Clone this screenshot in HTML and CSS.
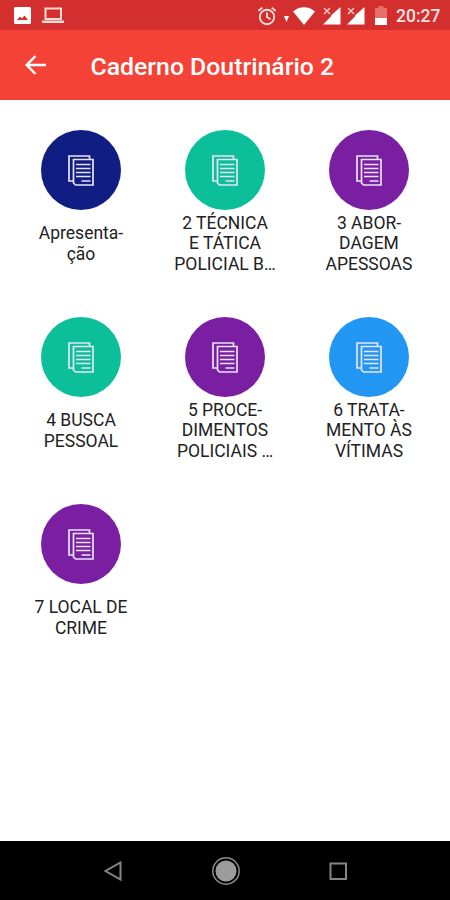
FILE: index.html
```html
<!DOCTYPE html>
<html lang="pt-BR">
<head>
    <meta charset="UTF-8">
    <meta name="viewport" content="width=device-width, initial-scale=1.0">
    <title>Caderno Doutrinário 2</title>
    <link rel="stylesheet" href="styles.css">
</head>
<body>
    <svg class="sprite" width="0" height="0">
        <symbol id="docs" viewBox="0 0 26 31">
            <path d="M21.500 4V1H1v25h4" />
            <path d="M5.500 4.500h19.500v25.500H7.500l-2-2z" />
            <path d="M8 9.500h14.500M8 13.500h14.500M8 17.500h14.500M8 21.500h14.500M13.500 26h9" />
        </symbol>
        <symbol id="signal" viewBox="0 0 18 18">
            <path d="M17.500 0v17.500H0l8-8V8.500z" fill="#fff" />
            <path d="M1 1l6 6M7 1L1 7" stroke="#fbd5d0" stroke-width="1.300" />
        </symbol>
    </svg>

    <div class="status-bar">
        <div class="notifications">
            <svg width="17" height="17" viewBox="0 0 17 17">
                <path fill="#fff" fill-rule="evenodd" d="M1.500 0h14A1.500 1.500 0 0 1 17 1.500v14a1.500 1.500 0 0 1-1.500 1.500h-14A1.500 1.500 0 0 1 0 15.500v-14A1.500 1.500 0 0 1 1.500 0zM3 13h11l-3.500-4.500-2.500 3-2-2z" />
            </svg>
            <svg width="22" height="17" viewBox="0 0 22 17">
                <path fill="none" stroke="#fbdcd8" stroke-width="2" d="M3.500 1.500h15.500v10.500H3.500z" />
                <path fill="#fbdcd8" d="M0 13.500h22v2.500H0z" />
            </svg>
        </div>
        <div class="system">
            <svg class="alarm" width="20" height="20" viewBox="0 0 20 20">
                <g fill="none" stroke="#fbdcd8" stroke-width="1.900">
                    <circle cx="10" cy="11" r="7.200" />
                    <path d="M10 6.500V11l3.500 2.300M1.300 5l4-3.400M18.700 5l-4-3.400" />
                </g>
            </svg>
            <svg class="arrow" width="5" height="6" viewBox="0 0 5 6"><path fill="#fff" d="M0 0h5L2.500 6z" /></svg>
            <svg class="wifi" width="22" height="18" viewBox="0 0 22 18">
                <path fill="#fff" d="M0 4.500C6-1.300 16-1.300 22 4.500L11 18z" />
            </svg>
            <svg class="signal" width="18" height="18"><use href="#signal" /></svg>
            <svg class="signal" width="18" height="18"><use href="#signal" /></svg>
            <svg class="battery" width="12" height="19" viewBox="0 0 12 19">
                <path fill="#e8706c" d="M3.500 0h5v2H12v10H0V2h3.500z" />
                <path fill="#fff" d="M0 12h12v7H0z" />
            </svg>
            <span class="time">20:27</span>
        </div>
    </div>

    <header class="app-bar">
        <svg width="22" height="20" viewBox="0 0 22 20">
            <path fill="none" stroke="#fff" stroke-width="2.500" d="M21 10H2M10.500 1L1.700 10l8.800 9" />
        </svg>
        <h1>Caderno Doutrinário 2</h1>
    </header>

    <main class="grid">
        <div class="item">
            <div class="circle navy"><svg class="docs"><use href="#docs" /></svg></div>
            <div class="label">Apresenta-<br>ção</div>
        </div>
        <div class="item">
            <div class="circle green"><svg class="docs"><use href="#docs" /></svg></div>
            <div class="label">2 TÉCNICA<br>E TÁTICA<br>POLICIAL B…</div>
        </div>
        <div class="item">
            <div class="circle purple"><svg class="docs"><use href="#docs" /></svg></div>
            <div class="label">3 ABOR-<br>DAGEM<br>APESSOAS</div>
        </div>
        <div class="item">
            <div class="circle green"><svg class="docs"><use href="#docs" /></svg></div>
            <div class="label">4 BUSCA<br>PESSOAL</div>
        </div>
        <div class="item">
            <div class="circle purple"><svg class="docs"><use href="#docs" /></svg></div>
            <div class="label">5 PROCE-<br>DIMENTOS<br>POLICIAIS …</div>
        </div>
        <div class="item">
            <div class="circle blue"><svg class="docs"><use href="#docs" /></svg></div>
            <div class="label">6 TRATA-<br>MENTO ÀS<br>VÍTIMAS</div>
        </div>
        <div class="item">
            <div class="circle purple"><svg class="docs"><use href="#docs" /></svg></div>
            <div class="label">7 LOCAL DE<br>CRIME</div>
        </div>
    </main>

    <nav class="nav-bar">
        <svg width="30" height="30" viewBox="0 0 30 30">
            <path fill="none" stroke="#858585" stroke-width="2" d="M22.500 6.500v17L7.500 15z" />
        </svg>
        <svg width="30" height="30" viewBox="0 0 30 30">
            <circle cx="15" cy="15" r="13.200" fill="none" stroke="#8c8c8c" stroke-width="1.500" />
            <circle cx="15" cy="15" r="10.500" fill="#9c9c9c" />
        </svg>
        <svg width="30" height="30" viewBox="0 0 30 30">
            <path fill="none" stroke="#858585" stroke-width="2" d="M7.500 7.500h15.500v15.500H7.500z" />
        </svg>
    </nav>
</body>
</html>
```

FILE: styles.css
```css
* {
    box-sizing: border-box;
}
body {
    margin: 0;
    height: 900px;
    display: flex;
    flex-direction: column;
    overflow: hidden;
    background: #fff;
    color: #222;
    font-family: Roboto, sans-serif;
}
svg {
    display: block;
    flex: none;
}
.sprite {
    position: absolute;
}
.status-bar {
    height: 30px;
    padding: 1px 9px 0 14px;
    display: flex;
    align-items: center;
    justify-content: space-between;
    background: #d32f2f;
}
.notifications,
.system {
    display: flex;
    align-items: center;
}
.notifications {
    gap: 11px;
}
.arrow {
    margin: 7px 4px 0 7px;
}
.signal {
    margin-left: 6px;
}
.wifi + .signal {
    margin-left: 8px;
}
.battery {
    margin-left: 10px;
}
.time {
    width: 45px;
    margin-left: 9px;
    color: #fde6e3;
    font-size: 17.5px;
    font-weight: 500;
    line-height: 20px;
    white-space: nowrap;
}
.app-bar {
    height: 70px;
    padding-left: 25px;
    display: flex;
    align-items: center;
    gap: 43.5px;
    background: #f44336;
}
.app-bar h1 {
    margin: 0;
    padding-top: 2px;
    color: #fff;
    font-size: 24.8px;
    font-weight: 500;
}
.grid {
    flex: 1;
    display: grid;
    grid-template-columns: repeat(3, 144px);
    grid-auto-rows: 187px;
    align-content: start;
    padding: 30px 9px 0;
}
.item {
    display: flex;
    flex-direction: column;
    align-items: center;
}
.circle {
    width: 80px;
    height: 80px;
    border-radius: 50%;
    display: flex;
    align-items: center;
    justify-content: center;
}
.navy { background: #101d82; }
.green { background: #0bbf9b; }
.purple { background: #7b1fa2; }
.blue { background: #2196f3; }
.docs {
    width: 26px;
    height: 31px;
    fill: none;
    stroke: #e8e4f4;
    stroke-width: 1.7;
}
.label {
    height: 66px;
    margin-top: 0.6px;
    display: flex;
    flex-direction: column;
    justify-content: center;
    font-size: 17.5px;
    line-height: 20.4px;
    text-align: center;
    white-space: nowrap;
}
.nav-bar {
    height: 59px;
    padding: 0 97px 0 98px;
    display: flex;
    align-items: center;
    justify-content: space-between;
    background: #000;
}
```
